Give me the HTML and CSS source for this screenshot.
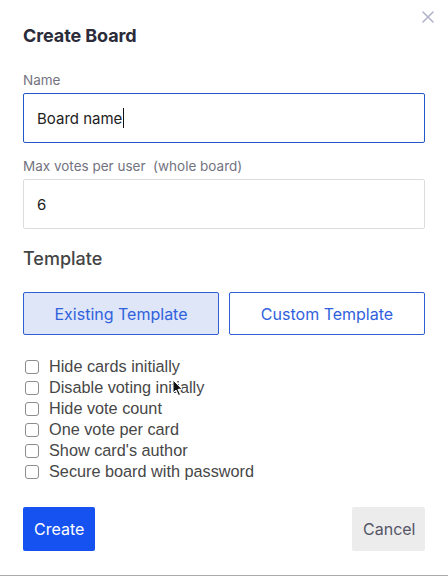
FILE: index.html
```html
<!DOCTYPE html>
<html lang="en">
<head>
<meta charset="utf-8">
<title>Create Board</title>
<link rel="stylesheet" href="styles.css">
</head>
<body>
<div class="dialog">
  <button class="close" aria-label="Close">
    <svg width="12" height="12" viewBox="0 0 12 12"><path d="M1 1 L11 11 M11 1 L1 11" stroke="#b3b3cb" stroke-width="1.6" stroke-linecap="round"/></svg>
  </button>
  <h1 class="title">Create Board</h1>

  <label class="label label-first">Name</label>
  <div class="field field-active">Board name<span class="caret"></span></div>

  <label class="label">Max votes per user&nbsp; (whole board)</label>
  <div class="field">6</div>

  <h2 class="section">Template</h2>
  <div class="tabs">
    <button class="tab tab-active">Existing Template</button>
    <button class="tab">Custom Template</button>
  </div>

  <div class="options">
    <label class="option"><input type="checkbox" class="check">Hide cards initially</label>
    <label class="option"><input type="checkbox" class="check">Disable voting initially</label>
    <label class="option"><input type="checkbox" class="check">Hide vote count</label>
    <label class="option"><input type="checkbox" class="check">One vote per card</label>
    <label class="option"><input type="checkbox" class="check">Show card's author</label>
    <label class="option"><input type="checkbox" class="check">Secure board with password</label>
  </div>

  <div class="actions">
    <button class="btn btn-primary">Create</button>
    <button class="btn btn-secondary">Cancel</button>
  </div>

  <svg class="pointer" width="12" height="18" viewBox="0 0 12 18"><path d="M1 1 L1 14 L4 11 L6.5 16.5 L8.5 15.6 L6 10.3 L10.2 10.3 Z" fill="#111" stroke="#fff" stroke-width="1" stroke-linejoin="round"/></svg>
</div>
</body>
</html>
```

FILE: styles.css
```css
* { box-sizing: border-box; }
html, body { margin: 0; padding: 0; background: #fff; }
body { font-family: Inter, "Noto Sans", sans-serif; width: 448px; height: 576px; overflow: hidden; }

.dialog {
  position: relative;
  height: 576px;
  padding: 24px 23px 0 23px;
  border-bottom: 1px solid #a9a9a9;
  display: flex;
  flex-direction: column;
}

.close {
  position: absolute;
  top: 11px;
  right: 14px;
  width: 12px;
  height: 12px;
  padding: 0;
  border: 0;
  background: none;
  display: flex;
}

.title {
  margin: 0;
  font-size: 18px;
  line-height: 24px;
  font-weight: 700;
  color: #2b2b3a;
  letter-spacing: -0.1px;
}

.label {
  display: block;
  font-size: 13.5px;
  line-height: 16px;
  color: #73737f;
  margin: 15px 0 5px;
}
.label-first { margin-top: 24px; }

.field {
  height: 50px;
  border: 1px solid #dcdce0;
  border-radius: 2px;
  padding: 0 13px;
  display: flex;
  align-items: center;
  font-size: 15px;
  color: #222;
}
.field-active { border-color: #2455c9; }
.caret {
  display: inline-block;
  width: 1px;
  height: 20px;
  background: #111;
  margin-left: 1px;
}

.section {
  margin: 18px 0 0;
  font-size: 18px;
  line-height: 24px;
  font-weight: 500;
  color: #444;
}

.tabs {
  margin-top: 21px;
  display: grid;
  grid-template-columns: 1fr 1fr;
  gap: 10px;
}
.tab {
  height: 43px;
  border: 1px solid #2f5fd3;
  border-radius: 2px;
  background: #fff;
  color: #2f62dc;
  font-family: Inter, sans-serif;
  font-size: 16px;
  padding: 0;
}
.tab-active { background: #dfe6f8; }

.options {
  margin-top: 21px;
  display: flex;
  flex-direction: column;
}
.option {
  display: flex;
  align-items: center;
  height: 21px;
  font-family: "Liberation Sans", Arial, sans-serif;
  font-size: 16.25px;
  color: #474747;
}
.check {
  appearance: none;
  -webkit-appearance: none;
  width: 14px;
  height: 14px;
  margin: 1px 10px 0 2px;
  border: 1px solid #8c8c8c;
  border-radius: 3px;
  background: #fff;
}

.actions {
  margin-top: 25px;
  display: flex;
  justify-content: space-between;
}
.btn {
  height: 44px;
  border: 0;
  border-radius: 2px;
  font-family: Inter, sans-serif;
  font-size: 16px;
  padding: 0 11px;
}
.btn-primary { background: #1652f0; color: #fff; width: 72px; }
.btn-secondary { background: #ececec; color: #555566; width: 73px; }

.pointer {
  position: absolute;
  left: 172px;
  top: 379px;
}
```
